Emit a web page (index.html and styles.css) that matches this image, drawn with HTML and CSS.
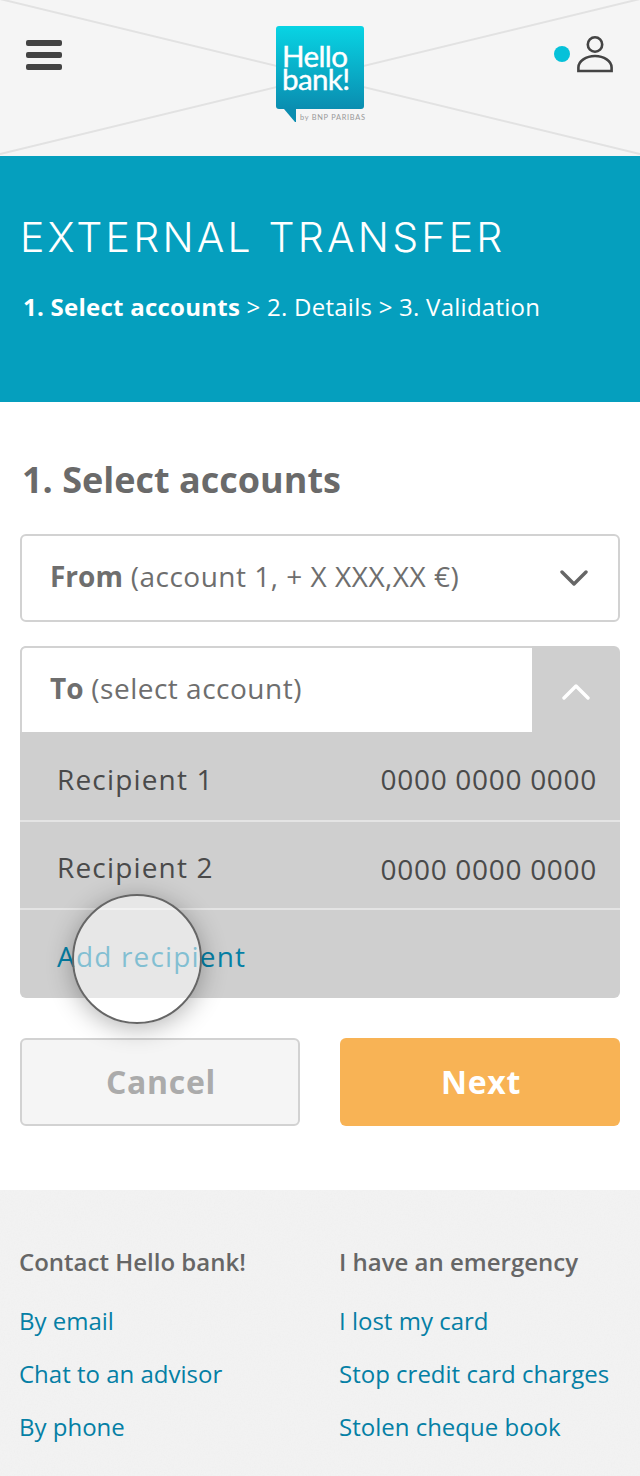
FILE: index.html
```html
<!DOCTYPE html>
<html lang="en">
<head>
<meta charset="utf-8">
<title>External transfer</title>
<link rel="stylesheet" href="styles.css">
</head>
<body>
<header class="topbar">
  <svg class="cross" viewBox="0 0 640 156" preserveAspectRatio="none" aria-hidden="true">
    <path d="M0 -1L640 154M640 -1L0 154" class="cross-line"/>
  </svg>
  <button class="burger" aria-label="Menu"><span></span><span></span><span></span></button>
  <div class="logo">
    <div class="logo-box"><span>Hello</span><span>bank!</span></div>
    <div class="logo-foot">
      <svg class="logo-tail" viewBox="0 0 12 13" aria-hidden="true"><path d="M0 0H12V13H11Z"/></svg>
      <span class="logo-by">by BNP PARIBAS</span>
    </div>
  </div>
  <div class="user">
    <span class="dot"></span>
    <svg class="user-icon" viewBox="0 0 38 38" aria-hidden="true">
      <circle cx="19" cy="9.5" r="7.2"/>
      <path d="M2.4 36V32.5C2.4 26 10 21 19 21S35.6 26 35.6 32.5V36Z"/>
    </svg>
  </div>
</header>

<section class="hero">
  <h1>EXTERNAL TRANSFER</h1>
  <p class="steps"><b>1. Select accounts</b> &gt; 2. Details &gt; 3. Validation</p>
</section>

<main class="main">
  <h2>1. Select accounts</h2>

  <div class="select">
    <span class="select-label"><b>From</b> (account 1, + X XXX,XX €)</span>
    <svg class="chev" viewBox="0 0 28 18" aria-hidden="true"><path d="M2 3L14 15L26 3"/></svg>
  </div>

  <div class="drop">
    <div class="drop-head">
      <div class="drop-label"><span><b>To</b> (select account)</span></div>
      <div class="drop-toggle"><svg class="chev chev-up" viewBox="0 0 28 18" aria-hidden="true"><path d="M2 15L14 3L26 15"/></svg></div>
    </div>
    <div class="row row-first"><span class="name">Recipient 1</span><span class="iban">0000 0000 0000</span></div>
    <div class="row row-second"><span class="name">Recipient 2</span><span class="iban iban-low">0000 0000 0000</span></div>
    <div class="row row-add"><a class="name">Add recipient</a></div>
  </div>

  <div class="actions">
    <button class="btn btn-cancel">Cancel</button>
    <button class="btn btn-next">Next</button>
  </div>
  <div class="touch"></div>
</main>

<footer class="footer">
  <svg class="grain" width="640" height="286" aria-hidden="true">
    <filter id="grain-f" x="0" y="0" width="100%" height="100%">
      <feTurbulence type="fractalNoise" baseFrequency="0.7" numOctaves="2" seed="4"/>
      <feColorMatrix type="matrix" values="0 0 0 0 0.5  0 0 0 0 0.5  0 0 0 0 0.5  0.5 0 0 0 -0.2"/>
    </filter>
    <rect width="640" height="286" filter="url(#grain-f)" opacity="0.18"/>
  </svg>
  <div class="fcol">
    <h3>Contact Hello bank!</h3>
    <a>By email</a>
    <a>Chat to an advisor</a>
    <a>By phone</a>
  </div>
  <div class="fcol">
    <h3>I have an emergency</h3>
    <a>I lost my card</a>
    <a>Stop credit card charges</a>
    <a>Stolen cheque book</a>
  </div>
</footer>
</body>
</html>
```
FILE: styles.css
```css
* { box-sizing: border-box; }
html, body { margin: 0; padding: 0; }
body { width: 640px; height: 1476px; overflow: hidden; background: #fff; font-family: "Open Sans", "Noto Sans", sans-serif; color: #666; position: relative; }

.topbar { position: relative; height: 156px; background: #f5f5f5; }
.cross { position: absolute; inset: 0; width: 640px; height: 156px; }
.cross-line { stroke: #e2e2e2; stroke-width: 2; fill: none; }
.burger { position: absolute; left: 26px; top: 40px; width: 36px; height: 30px; padding: 0; border: 0; background: none; display: flex; flex-direction: column; justify-content: space-between; }
.burger span { display: block; height: 6px; border-radius: 2px; background: #444; }

.logo { position: absolute; left: 276px; top: 26px; width: 92px; }
.logo-box { width: 88px; height: 83px; border-radius: 3px; background: linear-gradient(#08d4e4, #0a8db0); color: #fff; display: flex; flex-direction: column; padding: 18px 0 0 6px; font-family: "Lato", sans-serif; font-size: 29.5px; line-height: 23px; letter-spacing: -0.6px; font-weight: 400; -webkit-text-stroke: 0.4px #fff; }
.logo-foot { position: relative; height: 14px; display: flex; }
.logo-tail { width: 12px; height: 13px; margin-left: 8px; fill: #0a8db0; }
.logo-by { font-size: 7.4px; line-height: 10px; margin: 4px 0 0 4px; color: #999; white-space: nowrap; font-family: "Lato", sans-serif; letter-spacing: 0.72px; }

.user { position: absolute; left: 554px; top: 35px; display: flex; align-items: center; gap: 6px; }
.dot { width: 16px; height: 16px; border-radius: 50%; background: #06c1d9; }
.user-icon { width: 38px; height: 38px; fill: none; stroke: #444; stroke-width: 2.6; }

.hero { height: 246px; background: #059fbe; color: #fff; padding: 56px 0 0 20px; }
.hero h1 { margin: 0; font-family: "Inter", sans-serif; font-weight: 300; font-size: 41px; line-height: 50px; letter-spacing: 3.2px; }
.steps { margin: 30px 0 0 3px; font-size: 24px; line-height: 30px; letter-spacing: 0.25px; }
.steps b { font-weight: 700; }

.main { position: relative; height: 788px; padding: 55px 20px 0; }
.main h2 { margin: 0 0 31px 2px; font-size: 36px; line-height: 46px; font-weight: 700; color: #6a6a6a; }

.select { height: 88px; border: 2px solid #d2d2d2; border-radius: 6px; display: flex; align-items: center; justify-content: space-between; padding: 0 30px 0 28px; background: #fff; }
.select-label, .drop-label span { font-size: 28px; letter-spacing: 0.5px; color: #6e6e6e; }
.select-label { margin-top: -4px; }
.select-label b, .drop-label b { font-weight: 700; letter-spacing: 0; }
.chev { width: 28px; height: 18px; fill: none; stroke: #666; stroke-width: 3.4; stroke-linecap: round; stroke-linejoin: round; }
.chev-up { stroke: #fff; }

.drop { margin-top: 24px; height: 352px; border-radius: 6px; background: #cfcfcf; overflow: hidden; }
.drop-head { display: flex; height: 86px; }
.drop-label { width: 512px; background: #fff; border: 2px solid #d2d2d2; border-width: 2px 0 0 2px; border-top-left-radius: 6px; padding: 0 0 4px 28px; display: flex; align-items: center; }
.drop-toggle { flex: 1; display: flex; align-items: center; justify-content: center; padding-top: 6px; }

.row { padding: 0 23px 0 37px; display: flex; align-items: center; justify-content: space-between; font-size: 28px; color: #4a4a4a; }
.row-first { height: 90px; padding-top: 6px; border-bottom: 2px solid #e4e4e4; }
.row-second { height: 88px; padding-top: 4px; border-bottom: 2px solid #e4e4e4; }
.row-add { height: 88px; padding-top: 3px; }
.name { letter-spacing: 1.17px; }
.iban { letter-spacing: 0.7px; }
.iban-low { margin-top: 4px; }
.row-add a { color: #057fa5; }

.actions { display: grid; grid-template-columns: 1fr 1fr; gap: 40px; margin-top: 40px; }
.btn { height: 88px; padding: 0 0 2px 2px; border-radius: 6px; font-family: inherit; font-size: 32px; font-weight: 700; letter-spacing: 0.7px; }
.btn-cancel { background: #f5f5f5; border: 2px solid #d2d2d2; color: #ababab; }
.btn-next { background: #f8b355; border: 0; color: #fff; }

.touch { position: absolute; left: 72px; top: 492px; width: 130px; height: 130px; border-radius: 50%; border: 2px solid #666; background: rgba(255, 255, 255, 0.5); box-shadow: 0 4px 26px rgba(0, 0, 0, 0.3); }

.footer { position: relative; height: 286px; background: #f2f2f2; display: flex; padding: 55px 0 0 19px; }
.grain { position: absolute; left: 0; top: 0; }
.fcol { position: relative; flex: none; width: 320px; display: flex; flex-direction: column; }
.fcol h3 { margin: 0 0 25px; font-size: 24px; line-height: 34px; font-weight: 600; color: #666; }
.fcol a { font-size: 24px; line-height: 34px; margin-bottom: 19px; color: #057fa5; }
```
